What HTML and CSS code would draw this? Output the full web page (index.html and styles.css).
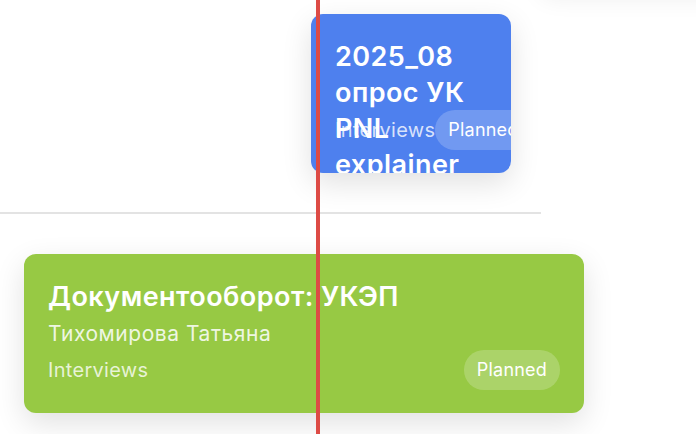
FILE: index.html
```html
<!DOCTYPE html>
<html lang="ru">
<head>
<meta charset="utf-8">
<title>Timeline</title>
<link rel="stylesheet" href="styles.css">
</head>
<body>
<div class="board">
  <div class="lane"></div>
  <div class="lane lane-open"></div>

  <div class="card card-ghost"></div>

  <div class="card card-blue">
    <div class="card-title">2025_08 опрос УК PNL explainer</div>
    <div class="card-meta">
      <span class="card-type">Interviews</span>
      <span class="pill">Planned</span>
    </div>
  </div>

  <div class="card card-green">
    <div class="card-title">Документооборот: УКЭП</div>
    <div class="card-sub">Тихомирова Татьяна</div>
    <div class="card-meta">
      <span class="card-type">Interviews</span>
      <span class="pill">Planned</span>
    </div>
  </div>

  <div class="today"></div>
</div>
</body>
</html>
```

FILE: styles.css
```css
html, body {
  margin: 0;
  padding: 0;
  background: #ffffff;
}

body {
  font-family: Inter, "Noto Sans", "Liberation Sans", sans-serif;
  overflow: hidden;
}

.board {
  position: relative;
  width: 696px;
  height: 434px;
  overflow: hidden;
}

.lane {
  width: 541px;
  height: 212px;
  border-bottom: 2px solid #e3e3e3;
}

.lane-open {
  border-bottom: none;
  height: 220px;
}

.card {
  position: absolute;
  box-sizing: border-box;
  height: 159px;
  padding: 25px 24px 23px;
  border-radius: 12px;
  display: flex;
  flex-direction: column;
  overflow: hidden;
  color: #ffffff;
  box-shadow: 0 10px 30px rgba(0, 0, 0, 0.12);
}

.card-ghost {
  left: 540px;
  top: -92px;
  width: 320px;
  height: 84px;
  background: #ffffff;
  box-shadow: 0 6px 24px rgba(0, 0, 0, 0.07);
}

.card-blue {
  left: 311px;
  top: 14px;
  width: 200px;
  background: #4e80ee;
}

.card-green {
  left: 24px;
  top: 254px;
  width: 560px;
  background: #97c944;
}

.card-title {
  font-size: 27px;
  font-weight: 600;
  letter-spacing: 0.45px;
  line-height: 36px;
  min-height: 0;
  flex-shrink: 1;
}

.card-sub {
  margin-top: 5px;
  font-size: 21px;
  letter-spacing: 0.55px;
  line-height: 28px;
  color: rgba(255, 255, 255, 0.86);
  flex-shrink: 0;
}

.card-meta {
  margin-top: auto;
  display: flex;
  justify-content: space-between;
  align-items: center;
  flex-shrink: 0;
}

.card-type {
  font-size: 20px;
  letter-spacing: 0.3px;
  line-height: 24px;
  color: rgba(255, 255, 255, 0.78);
  white-space: nowrap;
  flex-shrink: 0;
}

.pill {
  flex-shrink: 0;
  height: 40px;
  padding: 0 13px;
  border-radius: 20px;
  background: rgba(255, 255, 255, 0.2);
  font-size: 18px;
  letter-spacing: 0.2px;
  line-height: 40px;
  white-space: nowrap;
}

.today {
  position: absolute;
  left: 316px;
  top: 0;
  bottom: 0;
  width: 4px;
  background: #dd4b45;
}
```
